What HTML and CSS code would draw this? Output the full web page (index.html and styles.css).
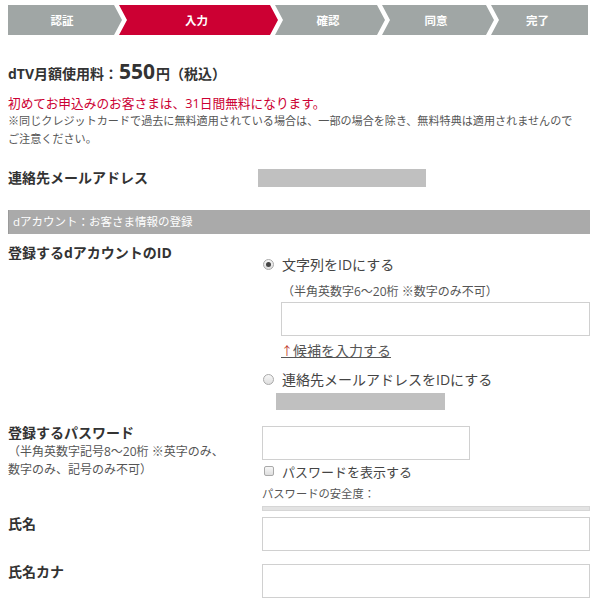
FILE: index.html
```html
<!DOCTYPE html>
<html lang="ja">
<head>
<meta charset="utf-8">
<title>dTV お申込み</title>
<link rel="stylesheet" href="styles.css">
</head>
<body>
<div class="page">
  <ol class="steps">
    <li class="step">認証</li>
    <li class="step active">入力</li>
    <li class="step">確認</li>
    <li class="step">同意</li>
    <li class="step">完了</li>
  </ol>

  <h2 class="fee">dTV月額使用料：<span class="price">550</span>円（税込）</h2>
  <p class="notice">初めてお申込みのお客さまは、31日間無料になります。</p>
  <p class="note">※同じクレジットカードで過去に無料適用されている場合は、一部の場合を除き、無料特典は適用されませんので<br>ご注意ください。</p>

  <div class="row email-row">
    <div class="label">連絡先メールアドレス</div>
    <div class="value"><div class="masked email-mask"></div></div>
  </div>

  <div class="section-bar">dアカウント：お客さま情報の登録</div>

  <div class="row id-row">
    <div class="label">登録するdアカウントのID</div>
    <div class="value id-options">
      <div class="option"><span class="radio checked"></span><span>文字列をIDにする</span></div>
      <div class="hint id-hint">（半角英数字6～20桁 ※数字のみ不可）</div>
      <div class="field id-field"></div>
      <a class="suggest" href="#"><span class="arrow">↑</span>候補を入力する</a>
      <div class="option option-mail"><span class="radio"></span><span>連絡先メールアドレスをIDにする</span></div>
      <div class="masked mail-id-mask"></div>
    </div>
  </div>

  <div class="row pw-row">
    <div class="label">登録するパスワード
      <div class="pw-hint">（半角英数字記号8～20桁 ※英字のみ、<br>数字のみ、記号のみ不可）</div>
    </div>
    <div class="value">
      <div class="field pw-field"></div>
      <div class="check"><span class="checkbox"></span><span>パスワードを表示する</span></div>
      <div class="strength-label">パスワードの安全度：</div>
      <div class="strength-bar"></div>
    </div>
  </div>

  <div class="row name-row">
    <div class="label">氏名</div>
    <div class="value"><div class="field"></div></div>
  </div>

  <div class="row kana-row">
    <div class="label">氏名カナ</div>
    <div class="value"><div class="field"></div></div>
  </div>
</div>
</body>
</html>
```

FILE: styles.css
```css
* { box-sizing: border-box; }

html, body {
  margin: 0;
  padding: 0;
  background: #fff;
}

body {
  font-family: "Open Sans", "Noto Sans CJK JP", sans-serif;
  color: #333;
  font-size: 14px;
}

.page {
  width: 600px;
  height: 606px;
  overflow: hidden;
  padding: 5px 10px 0 8px;
}

/* steps */
.steps {
  list-style: none;
  margin: 0;
  padding: 0;
  display: flex;
  height: 30px;
}

.step {
  display: flex;
  align-items: center;
  justify-content: center;
  padding: 0 6px 0 2px;
  background: #a0a6a5;
  color: #fff;
  font-weight: bold;
  font-size: 11.5px;
  margin-left: -3px;
  clip-path: polygon(0 0, calc(100% - 8px) 0, 100% 50%, calc(100% - 8px) 100%, 0 100%, 8px 50%);
}

.step:nth-child(1) {
  width: 114px;
  margin-left: 0;
  padding-left: 0;
  clip-path: polygon(0 0, calc(100% - 8px) 0, 100% 50%, calc(100% - 8px) 100%, 0 100%);
}
.step:nth-child(2) { width: 159px; }
.step:nth-child(3) { width: 110px; }
.step:nth-child(4) { width: 112px; }
.step:nth-child(5) {
  width: 97px;
  clip-path: polygon(0 0, 100% 0, 100% 100%, 0 100%, 8px 50%);
}

.step.active { background: #cc0033; }

/* fee */
.fee {
  margin: 22px 0 0;
  font-size: 14px;
  line-height: 28px;
  font-weight: bold;
  color: #333;
}

.price {
  font-size: 21px;
  margin: 0 1px;
}

.notice {
  margin: 6px 0 0;
  font-size: 12.7px;
  line-height: 18px;
  color: #cc0033;
}

.note {
  margin: 0;
  font-size: 11.1px;
  line-height: 18px;
  color: #555;
}

/* rows */
.row {
  display: flex;
}

.label {
  width: 254px;
  flex: none;
  font-weight: bold;
  font-size: 14px;
  line-height: 20px;
  color: #333;
}

.value {
  flex: 1;
  display: flex;
  flex-direction: column;
}

.email-row {
  margin-top: 20px;
  align-items: center;
}

.masked {
  background: #c0c0c0;
}

.email-mask {
  width: 168px;
  height: 18px;
  margin-left: -4px;
}

.section-bar {
  margin-top: 22px;
  height: 24px;
  background: #aaaaaa;
  border-left: 1px solid #9b9b9b;
  color: #fff;
  font-size: 11.5px;
  line-height: 24px;
  padding-left: 4px;
}

/* id */
.id-row {
  margin-top: 10px;
}

.id-row .label {
  line-height: 18px;
}

.id-options {
  padding-top: 10px;
}

.option {
  display: flex;
  align-items: center;
  height: 20px;
  font-size: 14px;
  color: #444;
}

.radio {
  width: 11px;
  height: 11px;
  border-radius: 50%;
  border: 1px solid #a9a9a9;
  background: linear-gradient(#f7f7f7, #dedede);
  margin: 0 8px 0 1px;
  display: flex;
  align-items: center;
  justify-content: center;
  flex: none;
}

.radio.checked::after {
  content: "";
  width: 5px;
  height: 5px;
  border-radius: 50%;
  background: #444;
}

.hint {
  font-size: 12px;
  line-height: 18px;
  color: #555;
}

.id-hint {
  margin: 9px 0 0 20px;
}

.field {
  height: 34px;
  border: 1px solid #d0d0d0;
  background: #fff;
}

.id-field {
  margin: 1px 0 0 19px;
}

.suggest {
  margin: 6px 0 0 19px;
  align-self: flex-start;
  font-size: 14px;
  line-height: 18px;
  color: #555;
  text-decoration: underline;
}

.suggest .arrow {
  color: #c0392b;
  font-size: 12px;
}

.option-mail {
  margin-top: 8px;
}

.mail-id-mask {
  margin: 4px 0 0 14px;
  width: 169px;
  height: 17px;
}

/* password */
.pw-row {
  margin-top: 13px;
}

.pw-hint {
  font-weight: normal;
  font-size: 12px;
  line-height: 18px;
  color: #555;
}

.pw-field {
  width: 208px;
  margin-top: 3px;
}

.check {
  display: flex;
  align-items: center;
  height: 18px;
  margin-top: 2px;
  font-size: 13px;
  color: #444;
}

.checkbox {
  width: 10px;
  height: 10px;
  border: 1px solid #a9a9a9;
  border-radius: 2px;
  background: linear-gradient(#f7f7f7, #dedede);
  margin: 0 8px 0 2px;
  flex: none;
}

.strength-label {
  margin-top: 6px;
  font-size: 11.3px;
  line-height: 16px;
  color: #555;
}

.strength-bar {
  margin-top: 4px;
  height: 5px;
  background: #e3e3e3;
  border: 1px solid #d6d6d6;
}

/* name */
.name-row {
  margin-top: 6px;
}

.kana-row {
  margin-top: 13px;
}

.name-row .label {
  line-height: 14px;
}

.kana-row .label {
  line-height: 15px;
}
```
